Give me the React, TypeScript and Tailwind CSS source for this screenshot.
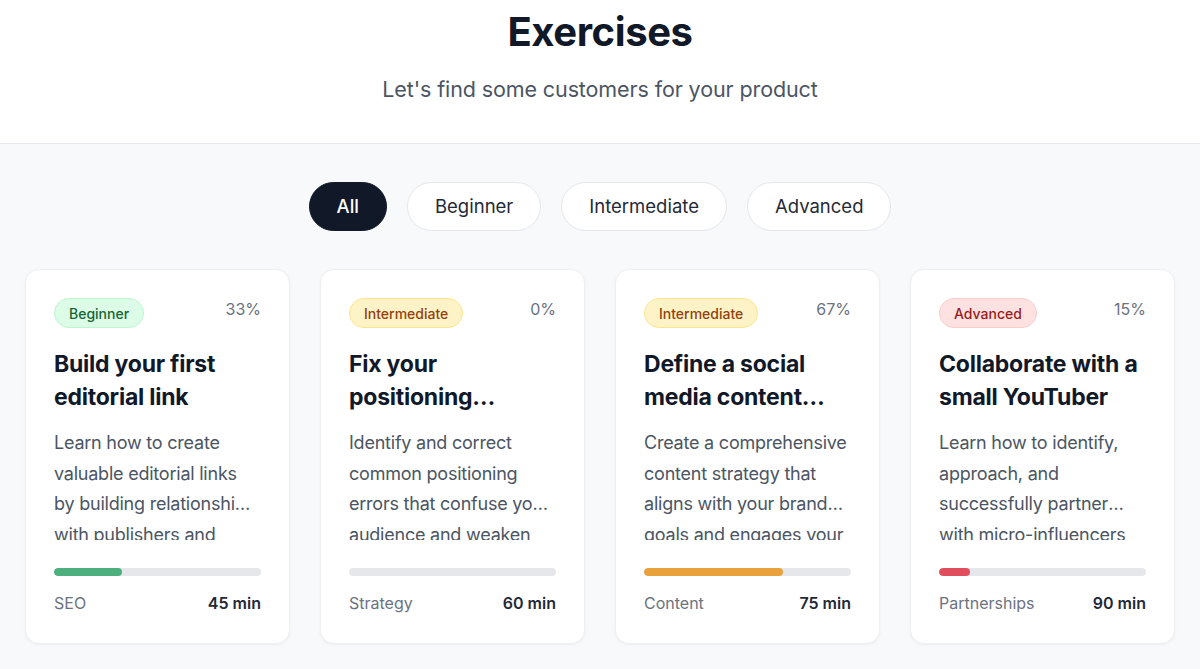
import { useState } from 'react';

type Level = 'Beginner' | 'Intermediate' | 'Advanced';

interface Exercise {
    id: number;
    level: Level;
    progress: number;
    title: string;
    description: string;
    category: string;
    minutes: number;
}

const exercises: Exercise[] = [
    {
        id: 1,
        level: 'Beginner',
        progress: 33,
        title: 'Build your first editorial link',
        description:
            'Learn how to create valuable editorial links by building relationships with publishers and journalists in your niche.',
        category: 'SEO',
        minutes: 45,
    },
    {
        id: 2,
        level: 'Intermediate',
        progress: 0,
        title: 'Fix your positioning mistakes today',
        description:
            'Identify and correct common positioning errors that confuse your audience and weaken your message.',
        category: 'Strategy',
        minutes: 60,
    },
    {
        id: 3,
        level: 'Intermediate',
        progress: 67,
        title: 'Define a social media content strategy',
        description:
            'Create a comprehensive content strategy that aligns with your brand goals and engages your audience.',
        category: 'Content',
        minutes: 75,
    },
    {
        id: 4,
        level: 'Advanced',
        progress: 15,
        title: 'Collaborate with a small YouTuber',
        description:
            'Learn how to identify, approach, and successfully partner with micro-influencers on YouTube to grow your reach.',
        category: 'Partnerships',
        minutes: 90,
    },
];

const badgeStyles: Record<Level, string> = {
    Beginner: 'bg-[#dcfce7] border-[#bbf7d0] text-[#166534]',
    Intermediate: 'bg-[#fef3c7] border-[#fde68a] text-[#92400e]',
    Advanced: 'bg-[#fee2e2] border-[#fecaca] text-[#991b1b]',
};

const barStyles: Record<Level, string> = {
    Beginner: 'bg-[#4caf7d]',
    Intermediate: 'bg-[#e9a23b]',
    Advanced: 'bg-[#e04e5e]',
};

const filters = ['All', 'Beginner', 'Intermediate', 'Advanced'];

export default function App() {
    const [active, setActive] = useState('All');

    return (
        <div className="min-h-screen bg-[#f8f9fa] font-['Inter','Liberation_Sans',sans-serif]">
            {/* Header */}
            <header className="border-b border-[#e5e7eb] bg-white pt-2 pb-[39px] text-center">
                <h1 className="text-[40px] font-bold leading-[48px] tracking-[-0.01em] text-[#111827]">Exercises</h1>
                <p className="mt-[18px] text-[21.5px] leading-[30px] tracking-[-0.005em] text-[#4b5563]">
                    Let's find some customers for your product
                </p>
            </header>

            {/* Filters */}
            <div className="mt-[38px] flex justify-center gap-[20px]">
                {filters.map((f) => (
                    <button
                        key={f}
                        onClick={() => setActive(f)}
                        className={
                            active === f
                                ? 'flex h-[49px] items-center rounded-full border border-[#111827] bg-[#111827] px-[27px] text-[18.5px] font-medium text-white'
                                : 'flex h-[49px] items-center rounded-full border border-[#e5e7eb] bg-white px-[27px] text-[18.5px] text-[#1f2937]'
                        }
                    >
                        {f}
                    </button>
                ))}
            </div>

            {/* Cards */}
            <div className="mt-[38px] grid grid-cols-4 gap-[30px] px-[25px]">
                {exercises.map((ex) => (
                    <div
                        key={ex.id}
                        className="flex flex-col rounded-[14px] border border-[#eef0f2] bg-white px-7 pt-[28px] pb-7 shadow-[0_1px_3px_rgba(0,0,0,0.05)]"
                    >
                        <div className="flex items-start justify-between">
                            <span
                                className={`flex h-[30px] items-center rounded-full border px-[14px] text-[14px] font-medium ${badgeStyles[ex.level]}`}
                            >
                                {ex.level}
                            </span>
                            <span className="mt-[-1px] text-[16px] leading-6 text-[#6b7280]">{ex.progress}%</span>
                        </div>

                        <h3 className="mt-5 line-clamp-2 text-[23px] font-bold leading-[33px] tracking-[-0.01em] text-[#111827]">
                            {ex.title}
                        </h3>

                        <p className="mt-[14px] line-clamp-3 h-[112px] overflow-hidden text-[18px] leading-[30.5px] tracking-[-0.0125em] text-[#4b5563]">
                            {ex.description}
                        </p>

                        {/* Progress */}
                        <div className="mt-7 h-2 w-full overflow-hidden rounded-full bg-[#e5e7eb]">
                            <div className={`h-full rounded-full ${barStyles[ex.level]}`} style={{ width: `${ex.progress}%` }} />
                        </div>

                        <div className="mt-[15px] flex items-center justify-between text-[16px] leading-6">
                            <span className="text-[#6b7280]">{ex.category}</span>
                            <span className="font-semibold text-[#1f2937]">{ex.minutes} min</span>
                        </div>
                    </div>
                ))}
            </div>
        </div>
    );
}
